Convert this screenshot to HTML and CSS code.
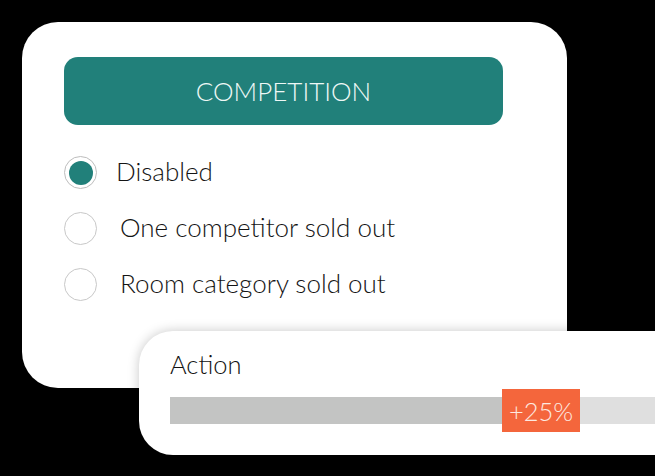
FILE: index.html
```html
<!DOCTYPE html>
<html lang="en">
<head>
  <meta charset="UTF-8" />
  <meta name="viewport" content="width=device-width, initial-scale=1.0" />
  <title>Competition rule</title>
  <link rel="stylesheet" href="styles.css">
</head>
<body>
  <div class="stage">
    <!-- Rule settings card -->
    <div class="card rule-card">
      <div class="rule-title">COMPETITION</div>
      <ul class="options">
        <li class="option">
          <span class="radio checked"></span>
          <span class="option-label">Disabled</span>
        </li>
        <li class="option">
          <span class="radio"></span>
          <span class="option-label shifted">One competitor sold out</span>
        </li>
        <li class="option">
          <span class="radio"></span>
          <span class="option-label shifted">Room category sold out</span>
        </li>
      </ul>
    </div>

    <!-- Action card, overlaps the bottom of the rule card -->
    <div class="card action-card">
      <div class="action-title">Action</div>
      <div class="slider">
        <span class="track filled"></span>
        <span class="badge">+25%</span>
        <span class="track rest"></span>
      </div>
    </div>
  </div>
</body>
</html>
```

FILE: styles.css
```css
/* Base */
body {
  margin: 0;
  background: #000;
  font-family: 'Lato', 'Liberation Sans', sans-serif;
  color: #151515;
  overflow: hidden;
}

.stage {
  padding: 22px 0 0 22px;
}

.card {
  background: #fff;
  box-sizing: border-box;
}

/* Rule card */
.rule-card {
  width: 545px;
  height: 366px;
  border-radius: 36px;
  padding: 35px 0 0 42px;
}

.rule-title {
  width: 439px;
  height: 68px;
  border-radius: 14px;
  background: #21807a;
  color: #eef8f6;
  font-size: 26px;
  font-weight: 300;
  display: flex;
  align-items: center;
  justify-content: center;
}

.options {
  list-style: none;
  margin: 31px 0 0;
  padding: 0;
  display: flex;
  flex-direction: column;
  gap: 23px;
}

.option {
  display: flex;
  align-items: center;
  gap: 19px;
  height: 33px;
  font-size: 26px;
  font-weight: 300;
  color: #141414;
}

.option-label {
  margin-top: -3px;
}

.option-label.shifted {
  padding-left: 4px;
}

/* Radio buttons */
.radio {
  width: 33px;
  height: 33px;
  box-sizing: border-box;
  border: 1.5px solid #c8c8c8;
  border-radius: 50%;
  display: flex;
  align-items: center;
  justify-content: center;
}

.radio.checked {
  border-color: #bdbdbd;
}

.radio.checked::after {
  content: "";
  width: 24px;
  height: 24px;
  border-radius: 50%;
  background: #21807a;
}

/* Action card */
.action-card {
  width: 516px;
  margin: -57px 0 0 117px;
  border-radius: 34px 0 0 34px;
  padding: 19px 0 23px 31px;
  box-shadow: 0 0 12px rgba(0, 0, 0, 0.22);
  position: relative;
}

.action-title {
  font-size: 25.5px;
  font-weight: 300;
  line-height: 1.15;
  color: #111;
}

.slider {
  margin-top: 10px;
  height: 43px;
  display: flex;
  align-items: center;
}

.track {
  height: 27px;
}

.track.filled {
  width: 332px;
  background: #c3c4c3;
}

.track.rest {
  flex: 1;
  background: #dfdfdf;
}

.badge {
  width: 78px;
  height: 43px;
  background: #f4663c;
  color: #fde9e0;
  font-size: 25.5px;
  font-weight: 300;
  display: flex;
  align-items: center;
  justify-content: center;
}
```
